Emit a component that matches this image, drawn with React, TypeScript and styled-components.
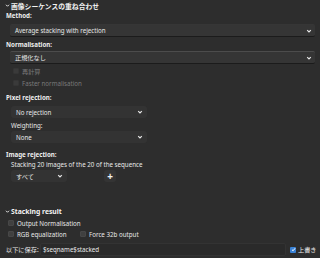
import React from 'react';
import styled, { createGlobalStyle } from 'styled-components';

const GlobalStyle = createGlobalStyle`
  html, body {
    margin: 0;
    padding: 0;
    background: #2d2d2d;
  }
  body {
    font-family: 'Noto Sans', 'Noto Sans CJK JP', sans-serif;
    font-size: 6.2px;
    color: #e8e8e8;
    white-space: nowrap;
  }
`;

const Chevron = ({ size = 6 }: { size?: number }) => (
  <svg width={size} height={size} viewBox='0 0 10 10'>
    <path d='M2 3.5 L5 6.5 L8 3.5' fill='none' stroke='#e8e8e8' strokeWidth='2' />
  </svg>
);

const Check = () => (
  <svg width='5' height='5' viewBox='0 0 10 10'>
    <path d='M2 5.5 L4.2 7.5 L8.2 2.5' fill='none' stroke='#fff' strokeWidth='2' />
  </svg>
);

const Panel = () => {
  return (
    <Page>
      <Expander $top={1}>
        <Chevron size={5} />
        <span>画像シーケンスの重ね合わせ</span>
      </Expander>

      <Label $top={1}>Method:</Label>
      <WideCombo $top={4}>
        <span>Average stacking with rejection</span>
        <Chevron />
      </WideCombo>

      <Label $top={3}>Normalisation:</Label>
      <WideCombo $top={2} $focus>
        <span>正規化なし</span>
        <Chevron />
      </WideCombo>

      <CheckRow $top={2} $indent={7} $disabled>
        <Box $disabled />
        <span>再計算</span>
      </CheckRow>
      <CheckRow $top={2} $indent={7} $disabled>
        <Box $disabled />
        <span>Faster normalisation</span>
      </CheckRow>

      <Label $top={5}>Pixel rejection:</Label>
      <Combo $top={4} $width={136}>
        <span>No rejection</span>
        <Chevron />
      </Combo>

      <SubLabel $top={3}>Weighting:</SubLabel>
      <Combo $top={0} $width={136}>
        <span>None</span>
        <Chevron />
      </Combo>

      <Label $top={7}>Image rejection:</Label>
      <SubLabel $top={1}>Stacking 20 images of the 20 of the sequence</SubLabel>
      <ComboLine>
        <Combo $top={0} $width={56}>
          <span>すべて</span>
          <Chevron />
        </Combo>
        <PlusButton>+</PlusButton>
      </ComboLine>

      <Expander $top={25}>
        <Chevron size={5} />
        <span>Stacking result</span>
      </Expander>
      <CheckRow $top={2} $indent={2}>
        <Box />
        <span>Output Normalisation</span>
      </CheckRow>
      <CheckGrid>
        <CheckRow $top={0} $indent={2}>
          <Box />
          <span>RGB equalization</span>
        </CheckRow>
        <CheckRow $top={0} $indent={0}>
          <Box />
          <span>Force 32b output</span>
        </CheckRow>
      </CheckGrid>

      <SaveRow>
        <SaveLabel>以下に保存:</SaveLabel>
        <PathInput>$seqname$stacked</PathInput>
        <Overwrite>
          <CheckedBox>
            <Check />
          </CheckedBox>
          <span>上書き</span>
        </Overwrite>
      </SaveRow>
    </Page>
  );
};

const Page = styled.div`
  display: flex;
  flex-direction: column;
  width: 320px;
  height: 258px;
  padding: 0 5px 0 6px;
  box-sizing: border-box;
  overflow: hidden;
`;

const Expander = styled.div<{ $top: number }>`
  display: flex;
  align-items: center;
  gap: 1px;
  height: 9px;
  margin-top: ${(p) => p.$top}px;
  margin-left: -1px;
  font-size: 6.8px;
  font-weight: bold;
  color: #f2f2f2;
`;

const Label = styled.div<{ $top: number }>`
  height: 9px;
  line-height: 9px;
  margin-top: ${(p) => p.$top}px;
  font-weight: bold;
  color: #efefef;
`;

const SubLabel = styled.div<{ $top: number }>`
  height: 10px;
  line-height: 10px;
  margin-top: ${(p) => p.$top}px;
  margin-left: 5px;
`;

const WideCombo = styled.div<{ $top: number; $focus?: boolean }>`
  display: flex;
  align-items: center;
  justify-content: space-between;
  height: 13px;
  margin-top: ${(p) => p.$top}px;
  margin-left: 4px;
  padding: 0 3px 0 5px;
  background: #353535;
  border-radius: 2px;
  border-top: 1px solid ${(p) => (p.$focus ? '#4c4c4c' : '#363636')};
  border-bottom: 1px solid #1b1b1b;
  box-sizing: border-box;
`;

const Combo = styled.div<{ $top: number; $width: number }>`
  display: flex;
  align-items: center;
  justify-content: space-between;
  width: ${(p) => p.$width}px;
  height: 12px;
  margin-top: ${(p) => p.$top}px;
  margin-left: 5px;
  padding: 0 4px 0 5px;
  background: #333333;
  border-radius: 3px;
  box-sizing: border-box;
`;

const ComboLine = styled.div`
  display: flex;
  align-items: center;
  gap: 37px;
`;

const PlusButton = styled.div`
  display: flex;
  align-items: center;
  justify-content: center;
  width: 12px;
  height: 12px;
  background: #343434;
  border-radius: 3px;
  font-size: 10px;
  font-weight: bold;
  color: #f2f2f2;
`;

const CheckRow = styled.div<{ $top: number; $indent: number; $disabled?: boolean }>`
  display: flex;
  align-items: center;
  gap: 3px;
  height: 10px;
  margin-top: ${(p) => p.$top}px;
  margin-left: ${(p) => p.$indent}px;
  color: ${(p) => (p.$disabled ? '#7a7a7a' : '#e8e8e8')};
`;

const Box = styled.span<{ $disabled?: boolean }>`
  width: 4px;
  height: 4px;
  background: ${(p) => (p.$disabled ? '#3a3a3a' : '#404040')};
  border: 1px solid ${(p) => (p.$disabled ? '#353535' : '#474747')};
  border-radius: 1px;
`;

const CheckGrid = styled.div`
  display: grid;
  grid-template-columns: 74px auto;
  margin-top: 1px;
`;

const SaveRow = styled.div`
  display: flex;
  align-items: center;
  margin-top: 4px;
  height: 13px;
`;

const SaveLabel = styled.span`
  width: 34px;
  flex-shrink: 0;
`;

const PathInput = styled.div`
  display: flex;
  align-items: center;
  width: 246px;
  flex-shrink: 0;
  height: 13px;
  padding-left: 2px;
  background: #2a2a2a;
  border: 1px solid #333;
  border-radius: 2px;
  box-sizing: border-box;
`;

const Overwrite = styled.div`
  display: flex;
  align-items: center;
  gap: 2px;
  margin-left: 4px;
`;

const CheckedBox = styled.span`
  display: flex;
  align-items: center;
  justify-content: center;
  width: 6px;
  height: 6px;
  background: #3a82d6;
  border-radius: 1px;
`;

const App = () => (
  <>
    <GlobalStyle />
    <Panel />
  </>
);

export default App;
